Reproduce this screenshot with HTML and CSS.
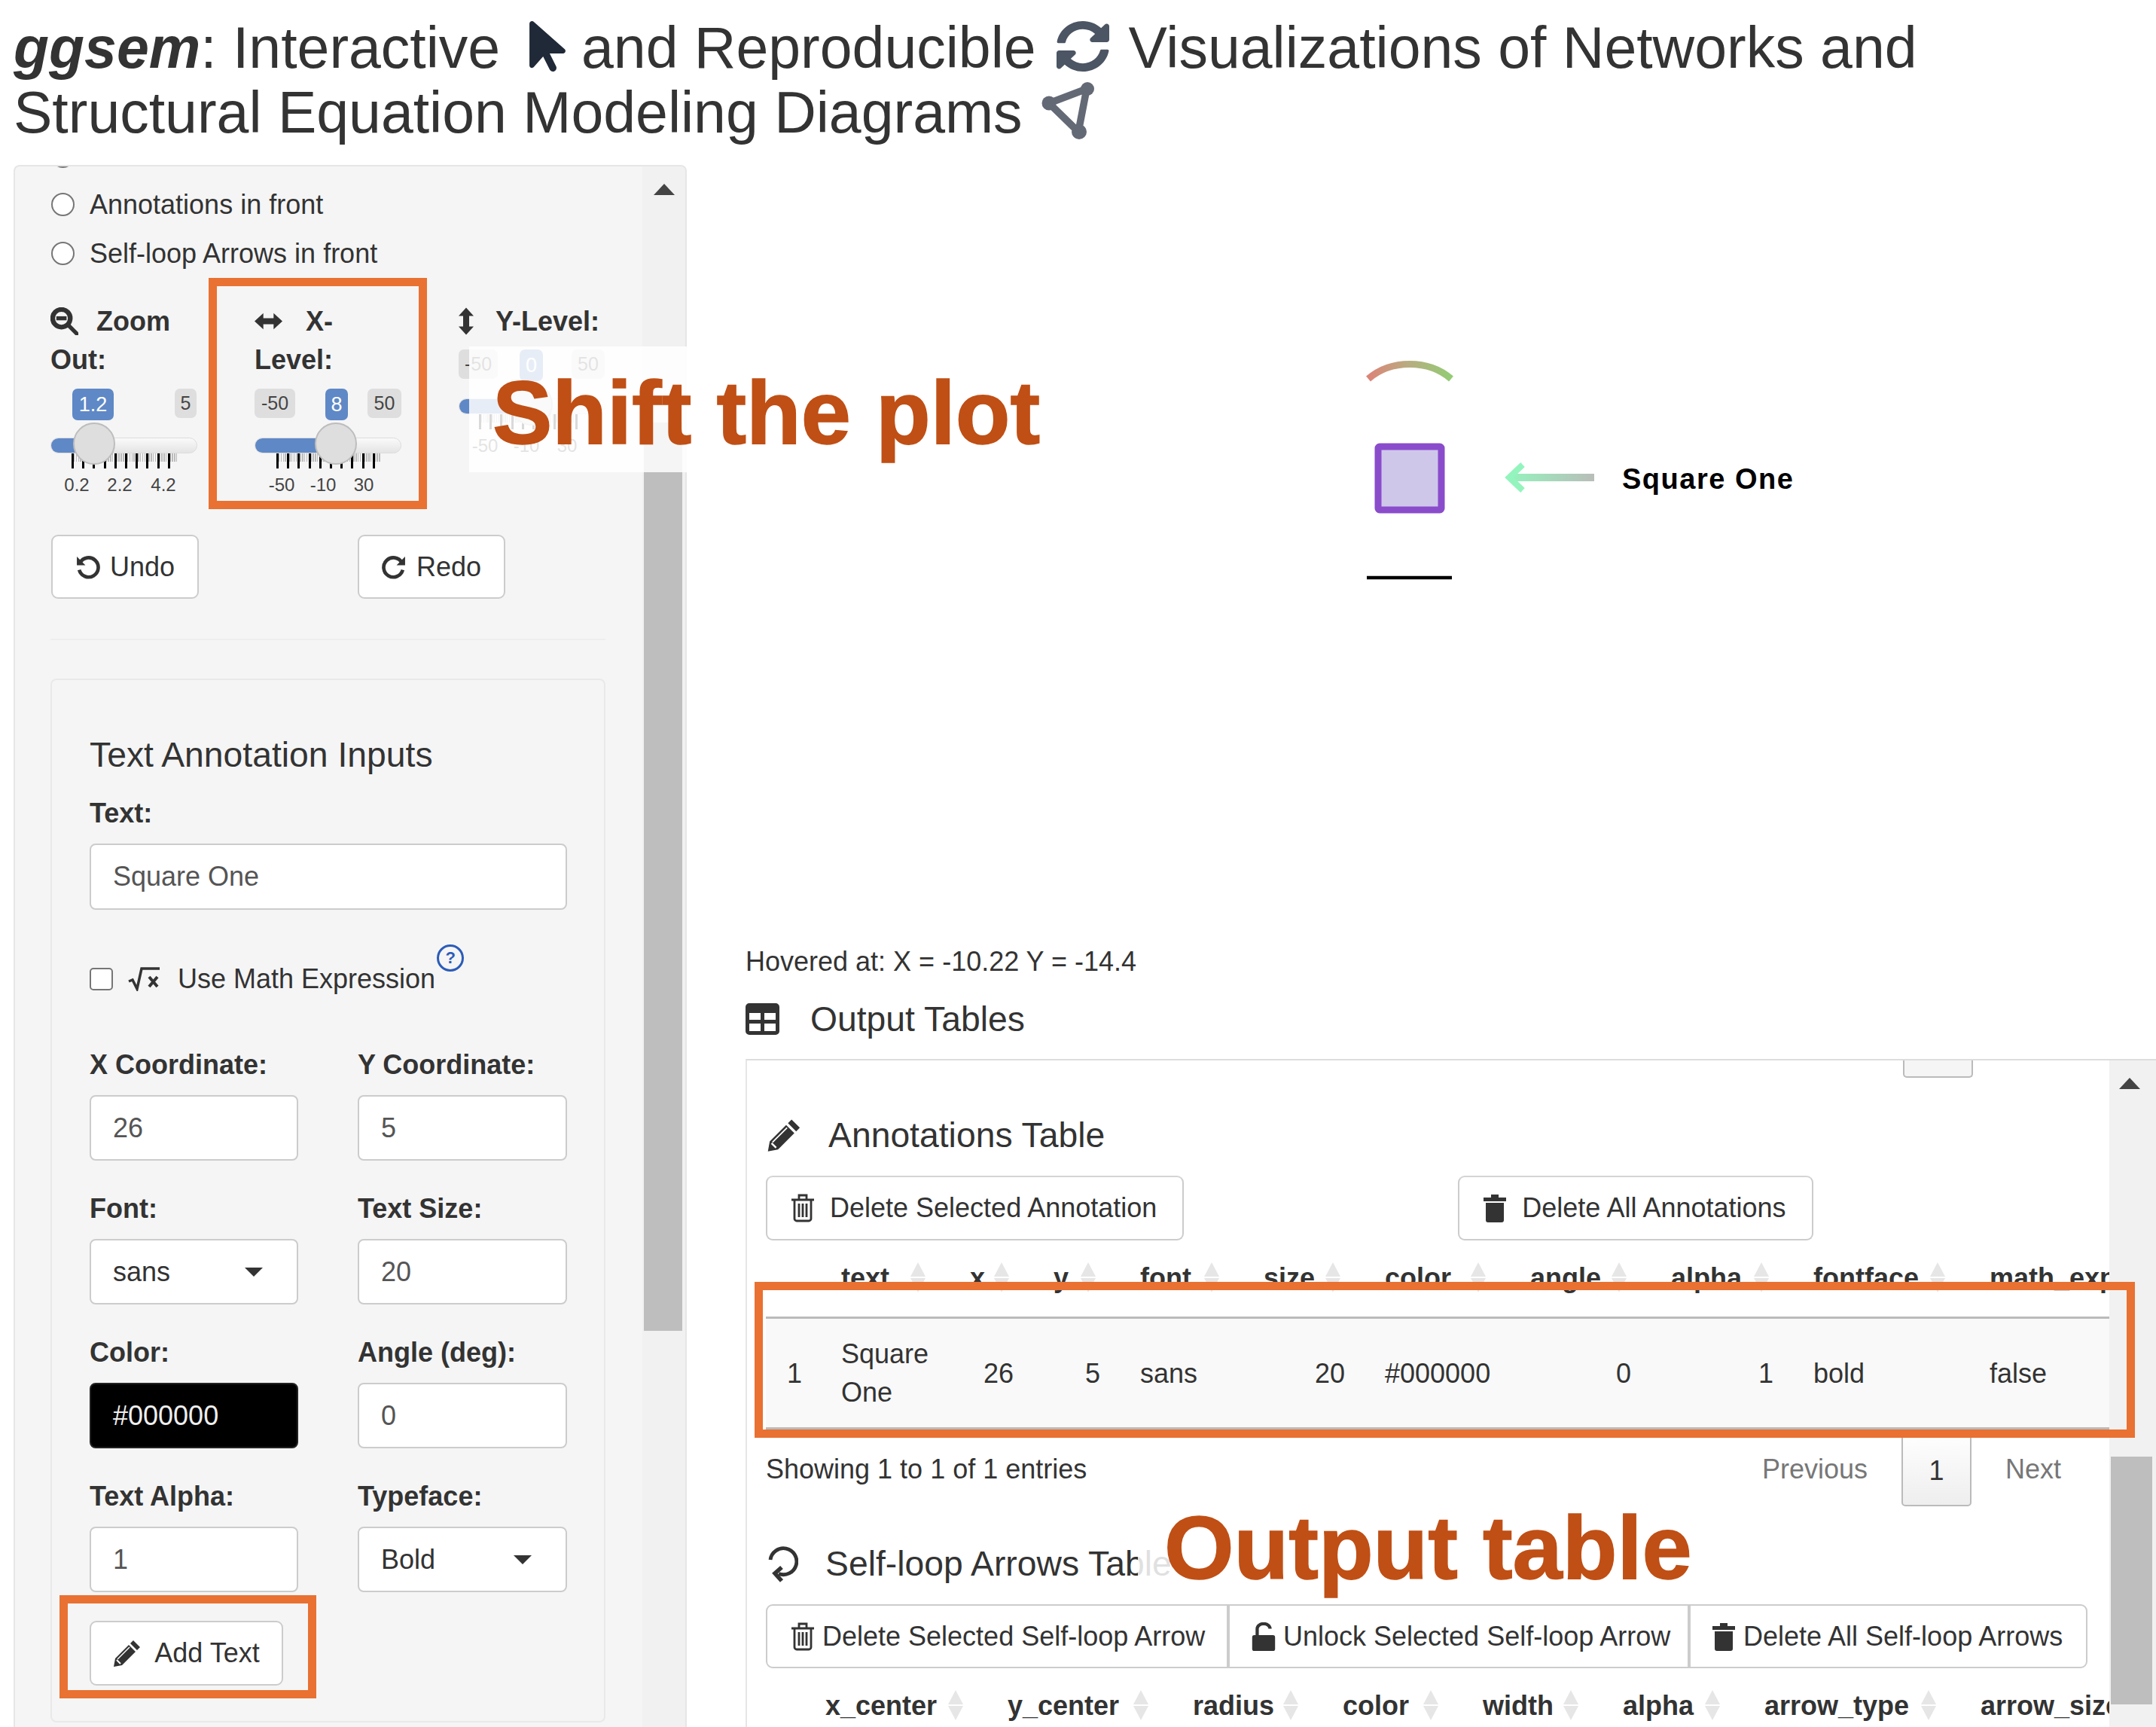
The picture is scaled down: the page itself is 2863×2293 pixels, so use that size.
FILE: index.html
```html
<!DOCTYPE html>
<html>
    <head>
        <meta charset="UTF-8">
        <title>ggsem</title>
        <link rel="stylesheet" href="styles.css">
    </head>
    <body>
        <h1 class="title">
            <b><i>ggsem</i></b>: Interactive
            <svg class="ico-cursor" viewBox="0 32 320 448"><path d="M0 55.2V426c0 12.2 9.9 22 22 22 6.3 0 12.4-2.7 16.6-7.5L121.2 346l58.1 116.3c7.9 15.8 27.1 22.2 42.9 14.3s22.2-27.1 14.3-42.9L179.8 320h118.1c12.2 0 22.1-9.9 22.1-22.1 0-6.3-2.7-12.3-7.4-16.5L38.6 37.9C34.3 34.1 28.9 32 23.2 32 10.4 32 0 42.4 0 55.2z"/></svg>
            and Reproducible
            <svg class="ico-sync" viewBox="8 8 496 496" preserveAspectRatio="none"><path d="M370.72 133.28C339.458 104.008 298.888 87.962 255.848 88c-77.458.068-144.328 53.178-162.791 126.85-1.344 5.363-6.122 9.15-11.651 9.15H24.103c-7.498 0-13.194-6.807-11.807-14.176C33.933 94.924 134.813 8 256 8c66.448 0 126.791 26.136 171.315 68.685L463.03 40.97C478.149 25.851 504 36.559 504 57.941V192c0 13.255-10.745 24-24 24H345.941c-21.382 0-32.09-25.851-16.971-40.971l41.75-41.749zM32 296h134.059c21.382 0 32.09 25.851 16.971 40.971l-41.75 41.75c31.262 29.273 71.835 45.319 114.876 45.28 77.418-.07 144.315-53.144 162.787-126.849 1.344-5.363 6.122-9.15 11.651-9.15h57.304c7.498 0 13.194 6.807 11.807 14.176C478.067 417.076 377.187 504 256 504c-66.448 0-126.791-26.136-171.315-68.685L48.97 471.03C33.851 486.149 8 475.441 8 454.059V320c0-13.255 10.745-24 24-24z"/></svg>
            Visualizations of Networks and<br>
            Structural Equation Modeling Diagrams
            <svg class="ico-graph" viewBox="0 0 70 77"><path d="M60 10 L10 29 L49 67 Z" fill="none" stroke="#636975" stroke-width="9.500" stroke-linejoin="round"/><circle cx="61" cy="10" r="9"/><circle cx="10" cy="29" r="9.500"/><circle cx="50" cy="67" r="10"/></svg>
        </h1>

        <div class="columns">
            <aside class="sidebar">
                <div class="side-body">
                    <div class="radio-row radio-cut"><span class="radio"></span></div>
                    <div class="radio-row"><span class="radio"></span>Annotations in front</div>
                    <div class="radio-row"><span class="radio"></span>Self-loop Arrows in front</div>

                    <div class="slider-grid">
                        <div>
                            <div class="slider-label">
                                <svg class="ico-label ico-zoom" viewBox="0 0 38 38"><circle cx="15" cy="15" r="12" fill="none" stroke="#333" stroke-width="6.500"/><path d="M8 15h14" stroke="#333" stroke-width="5.500"/><path d="M24 24l12 12" stroke="#333" stroke-width="5.500" stroke-linecap="round"/></svg>Zoom Out:
                            </div>
                            <div class="slider">
                                <span class="badge badge-on" style="left:29px;width:55px">1.2</span>
                                <span class="badge" style="left:165px;width:29px">5</span>
                                <div class="track"><div class="track-fill" style="width:58px"></div></div>
                                <div class="ticks" style="left:28px;width:140px"></div>
                                <span class="handle" style="left:30px"></span>
                                <span class="tick-label" style="left:35px">0.2</span>
                                <span class="tick-label" style="left:92px">2.2</span>
                                <span class="tick-label" style="left:150px">4.2</span>
                            </div>
                        </div>
                        <div>
                            <div class="slider-label">
                                <svg class="ico-label" viewBox="0 0 38 24"><path d="M0 12L12 1v7h14V1l12 11-12 11v-7H12v7z" fill="#333"/></svg>X-Level:
                            </div>
                            <div class="slider">
                                <span class="badge" style="left:0;width:54px">-50</span>
                                <span class="badge badge-on" style="left:94px;width:30px">8</span>
                                <span class="badge" style="left:150px;width:45px">50</span>
                                <div class="track"><div class="track-fill" style="width:108px"></div></div>
                                <div class="ticks" style="left:29px;width:139px"></div>
                                <span class="handle" style="left:80px"></span>
                                <span class="tick-label" style="left:36px">-50</span>
                                <span class="tick-label" style="left:91px">-10</span>
                                <span class="tick-label" style="left:145px">30</span>
                            </div>
                        </div>
                        <div>
                            <div class="slider-label">
                                <svg class="ico-label ico-v" viewBox="0 0 20 36"><path d="M10 0l10 11h-6v14h6L10 36 0 25h6V11H0z" fill="#333"/></svg>Y-Level:
                            </div>
                            <div class="slider slider-y">
                                <span class="badge" style="left:0;width:52px">-50</span>
                                <span class="badge badge-on" style="left:81px;width:31px">0</span>
                                <span class="badge" style="left:150px;width:44px">50</span>
                                <div class="track"><div class="track-fill" style="width:97px"></div></div>
                                <div class="ticks" style="left:27px;width:131px"></div>
                                <span class="handle" style="left:69px"></span>
                                <span class="tick-label" style="left:35px">-50</span>
                                <span class="tick-label" style="left:90px">-10</span>
                                <span class="tick-label" style="left:144px">30</span>
                            </div>
                        </div>
                    </div>

                    <div class="undo-row">
                        <div class="btn btn-undo">
                            <svg class="ico-btn" viewBox="0 0 32 32"><path d="M6 11a12.500 12.500 0 1 1-1 9" fill="none" stroke="#333" stroke-width="4.500"/><path d="M2 3v11h11z" fill="#333"/></svg>Undo
                        </div>
                        <div class="btn btn-undo">
                            <svg class="ico-btn" viewBox="0 0 32 32"><path d="M26 11a12.500 12.500 0 1 0 1 9" fill="none" stroke="#333" stroke-width="4.500"/><path d="M30 3v11H19z" fill="#333"/></svg>Redo
                        </div>
                    </div>
                    <hr class="side-rule">

                    <div class="well">
                        <h4 class="well-title">Text Annotation Inputs</h4>
                        <label class="field-label">Text:</label>
                        <div class="input">Square One</div>
                        <div class="check-row">
                            <span class="checkbox"></span>
                            <svg class="ico-sqrt" viewBox="0 0 42 32"><path d="M1 19l5-2 6 12 6-27h24" fill="none" stroke="#333" stroke-width="3.500"/><path d="M28 13l11 13M39 13L28 26" stroke="#333" stroke-width="4"/></svg>
                            <span>Use Math Expression</span>
                            <span class="help">?</span>
                        </div>
                        <div class="form-grid">
                            <div><label class="field-label">X Coordinate:</label><div class="input">26</div></div>
                            <div><label class="field-label">Y Coordinate:</label><div class="input">5</div></div>
                            <div><label class="field-label">Font:</label><div class="input select">sans</div></div>
                            <div><label class="field-label">Text Size:</label><div class="input">20</div></div>
                            <div><label class="field-label">Color:</label><div class="input input-black">#000000</div></div>
                            <div><label class="field-label">Angle (deg):</label><div class="input">0</div></div>
                            <div><label class="field-label">Text Alpha:</label><div class="input">1</div></div>
                            <div><label class="field-label">Typeface:</label><div class="input select">Bold</div></div>
                        </div>
                        <div class="btn btn-add">
                            <svg class="ico-pencil" viewBox="0 0 38 38"><use href="#pencil"/></svg>Add Text
                        </div>
                    </div>
                </div>
                <div class="scrollbar">
                    <span class="scroll-arrow"></span>
                    <div class="scroll-thumb side-thumb"></div>
                </div>
            </aside>

            <main class="main">
                <svg class="plot" viewBox="912 219 1951 1029">
                    <defs>
                        <linearGradient id="arcfill" x1="0" x2="1" y1="0" y2="0"><stop offset="0" stop-color="#dc8478"/><stop offset="0.5" stop-color="#b7ae80"/><stop offset="1" stop-color="#93cc74"/></linearGradient>
                        <linearGradient id="arrowfill" gradientUnits="userSpaceOnUse" x1="2000" x2="2117" y1="0" y2="0"><stop offset="0" stop-color="#93f5bd"/><stop offset="1" stop-color="#b9bdb9"/></linearGradient>
                        <symbol id="pencil" viewBox="0 0 38 38"><path d="M27 2l9 9-4 4-9-9zM21 8l9 9L12 35 1 37l2-11z" fill="#333"/><path d="M6 27l16-16" stroke="#fff" stroke-width="1.500"/><path d="M5 28l5 5" stroke="#fff" stroke-width="2"/></symbol>
                        <symbol id="trash-o" viewBox="0 0 32 38"><path d="M11 7V2h10v5M1 8h30M5 8v25a3 3 0 0 0 3 3h16a3 3 0 0 0 3-3V8M11 13v18M16 13v18M21 13v18" fill="none" stroke="#333" stroke-width="2.800"/></symbol>
                        <symbol id="trash" viewBox="0 0 32 38"><path d="M11 5V1h10v4h10v5H1V5zM4 12h24v23a3 3 0 0 1-3 3H7a3 3 0 0 1-3-3z" fill="#333"/></symbol>
                    </defs>
                    <path d="M1817 503c30-26 80-26 110 0" fill="none" stroke="url(#arcfill)" stroke-width="9"/>
                    <rect x="1830" y="593" width="84" height="84" rx="2" fill="#cfc7ea" stroke="#8a4ccb" stroke-width="9"/>
                    <path d="M2117 634H2006" stroke="url(#arrowfill)" stroke-width="10"/>
                    <path d="M2022 617L2004 634l18 17" fill="none" stroke="#93f5bd" stroke-width="8"/>
                    <text class="plot-label" x="2154" y="649">Square One</text>
                    <path d="M1815 767H1928" stroke="#000" stroke-width="4.500"/>
                </svg>

                <div class="hover-text">Hovered at: X = -10.22 Y = -14.4</div>
                <h4 class="section-title output-title">
                    <svg class="ico-table" viewBox="0 0 45 42"><path fill-rule="evenodd" d="M5 0h35a5 5 0 0 1 5 5v32a5 5 0 0 1-5 5H5a5 5 0 0 1-5-5V5a5 5 0 0 1 5-5zM5 13v9h15v-9zM25 13v9h15v-9zM5 27v10h15V27zM25 27v10h15V27z" fill="#333"/></svg>
                    Output Tables
                </h4>

                <div class="output-box">
                    <div class="output-body">
                        <div class="pager-stub"><span class="page-stub"></span></div>

                        <h4 class="section-title table-title">
                            <svg class="ico-head" viewBox="0 0 38 38"><use href="#pencil"/></svg>
                            Annotations Table
                        </h4>
                        <div class="btn-row">
                            <div class="btn btn-del"><svg class="ico-trash" viewBox="0 0 32 38"><use href="#trash-o"/></svg>Delete Selected Annotation</div>
                            <div class="btn btn-del btn-del-all"><svg class="ico-trash" viewBox="0 0 32 38"><use href="#trash"/></svg>Delete All Annotations</div>
                        </div>
                        <div class="dt">
                            <table>
                                <colgroup><col width="72"><col width="171"><col width="111"><col width="115"><col width="164"><col width="161"><col width="193"><col width="187"><col width="189"><col width="234"><col width="260"></colgroup>
                                <thead>
                                    <tr><th></th><th class="sort">text</th><th class="sort">x</th><th class="sort">y</th><th class="sort">font</th><th class="sort">size</th><th class="sort">color</th><th class="sort">angle</th><th class="sort">alpha</th><th class="sort">fontface</th><th>math_expr</th></tr>
                                </thead>
                                <tbody>
                                    <tr><td>1</td><td>Square One</td><td class="num">26</td><td class="num">5</td><td>sans</td><td class="num">20</td><td>#000000</td><td class="num">0</td><td class="num">1</td><td>bold</td><td>false</td></tr>
                                </tbody>
                            </table>
                        </div>
                        <div class="pager">
                            <span class="pager-info">Showing 1 to 1 of 1 entries</span>
                            <span class="pager-off">Previous</span>
                            <span class="page-on">1</span>
                            <span class="pager-off">Next</span>
                        </div>

                        <h4 class="section-title table-title loop-title">
                            <svg class="ico-loop" viewBox="0 0 40 50"><path d="M3 20A17.500 17.500 0 1 1 14 38.500" fill="none" stroke="#333" stroke-width="4.800"/><path d="M18 30l-9 8 9 10" fill="none" stroke="#333" stroke-width="5.500"/></svg>
                            Self-loop Arrows Table
                        </h4>
                        <div class="btn-row btn-group">
                            <div class="btn btn-grp"><svg class="ico-trash" viewBox="0 0 32 38"><use href="#trash-o"/></svg>Delete Selected Self-loop Arrow</div>
                            <div class="btn btn-grp"><svg class="ico-trash" viewBox="0 0 32 40"><path d="M3 18h26a3 3 0 0 1 3 3v16a3 3 0 0 1-3 3H3a3 3 0 0 1-3-3V21a3 3 0 0 1 3-3z" fill="#333"/><path d="M7 18V9a9 7 0 0 1 18 0" fill="none" stroke="#333" stroke-width="4.500"/></svg>Unlock Selected Self-loop Arrow</div>
                            <div class="btn btn-grp"><svg class="ico-trash" viewBox="0 0 32 38"><use href="#trash"/></svg>Delete All Self-loop Arrows</div>
                        </div>
                        <div class="dt">
                            <table>
                                <colgroup><col width="51"><col width="242"><col width="246"><col width="199"><col width="186"><col width="186"><col width="188"><col width="287"><col width="272"></colgroup>
                                <thead>
                                    <tr><th></th><th class="sort">x_center</th><th class="sort">y_center</th><th class="sort">radius</th><th class="sort">color</th><th class="sort">width</th><th class="sort">alpha</th><th class="sort">arrow_type</th><th>arrow_size</th></tr>
                                </thead>
                            </table>
                        </div>
                    </div>
                    <div class="scrollbar scrollbar-main">
                        <span class="scroll-arrow"></span>
                        <div class="scroll-thumb main-thumb"></div>
                    </div>
                </div>
            </main>
        </div>

        <!-- callouts drawn over the app -->
        <div class="mark mark-x"></div>
        <div class="mark mark-add"></div>
        <div class="mark mark-table"></div>
        <div class="caption caption-shift">Shift the plot</div>
        <div class="caption caption-output">Output table</div>
    </body>
</html>
```

FILE: styles.css
```css
* {
    box-sizing: border-box;
}

html,
body {
    margin: 0;
    height: 2293px;
    overflow: hidden;
}

body {
    position: relative;
    width: 2863px;
    background: #fff;
    color: #333;
    font-family: "Liberation Sans", Arial, sans-serif;
    font-size: 36px;
    line-height: 54px;
}

svg {
    flex: none;
}

/* page title */
.title {
    margin: 0;
    height: 219px;
    padding: 20px 0 0 18px;
    font-size: 77px;
    line-height: 86px;
    font-weight: 400;
    white-space: nowrap;
}

.ico-cursor {
    width: 48px;
    height: 67px;
    margin-left: 17px;
    vertical-align: -5px;
    fill: #1f2937;
}

.ico-sync {
    width: 70px;
    height: 67px;
    margin: 0 4px 0 6px;
    vertical-align: -5px;
    fill: #4b5563;
}

.ico-graph {
    width: 70px;
    height: 77px;
    margin-left: 4px;
    vertical-align: -9px;
    fill: #636975;
}

.columns {
    display: flex;
    height: 2074px;
}

/* left panel */
.sidebar {
    display: flex;
    flex: none;
    width: 894px;
    margin-left: 18px;
    overflow: hidden;
    background: #f5f5f5;
    border: 2px solid #e6e6e6;
    border-bottom: 0;
    border-radius: 8px 8px 0 0;
}

.side-body {
    flex: none;
    width: 833px;
    margin-top: -45px;
    padding-left: 47px;
}

.radio-row {
    display: flex;
    align-items: center;
    gap: 20px;
    height: 65px;
    padding-left: 1px;
}

.radio-cut {
    height: 63px;
}

.radio {
    flex: none;
    width: 31px;
    height: 31px;
    background: #fff;
    border: 2px solid #767676;
    border-radius: 50%;
}

.slider-grid {
    display: grid;
    grid-template-columns: repeat(3, 195px);
    column-gap: 76px;
    height: 279px;
    margin-top: 32px;
}

.slider-label {
    font-weight: 700;
    line-height: 51px;
}

.ico-label {
    width: 37px;
    height: 37px;
    margin-right: 31px;
    vertical-align: -6px;
}

.ico-zoom {
    margin-right: 24px;
}

.ico-v {
    width: 20px;
    height: 37px;
    margin-right: 29px;
}

.slider {
    position: relative;
    margin-top: 13px;
    height: 150px;
}

.slider-y {
    margin-top: 12px;
}

.badge {
    position: absolute;
    top: 0;
    height: 39px;
    background: #dedede;
    border-radius: 7px;
    color: #444;
    font-size: 25px;
    line-height: 39px;
    text-align: center;
}

.badge-on {
    height: 42px;
    background: #5f88c6;
    color: #fff;
    font-size: 27px;
    line-height: 42px;
}

.track {
    position: absolute;
    top: 65px;
    left: 0;
    width: 195px;
    height: 21px;
    overflow: hidden;
    background: linear-gradient(#fafafa, #e4e4e4);
    border: 1px solid #dcdcdc;
    border-radius: 11px;
}

.track-fill {
    height: 100%;
    background: #5f88c6;
}

.ticks {
    position: absolute;
    top: 86px;
    height: 20px;
    background-image: repeating-linear-gradient(90deg, #000 0 3px, transparent 3px 14.200px), repeating-linear-gradient(90deg, #bbb 0 1.500px, transparent 1.500px 2.840px);
    background-size: 100% 100%, 100% 11px;
    background-repeat: no-repeat;
}

.handle {
    position: absolute;
    top: 45px;
    width: 56px;
    height: 56px;
    background: #dedede;
    border: 2px solid #bdbdbd;
    border-radius: 50%;
}

.tick-label {
    position: absolute;
    top: 113px;
    color: #444;
    font-size: 24px;
    line-height: 30px;
    transform: translateX(-50%);
}

/* buttons */
.btn {
    display: flex;
    align-items: center;
    justify-content: center;
    background: #fff;
    border: 2px solid #ccc;
    border-radius: 9px;
    white-space: nowrap;
}

.undo-row {
    display: flex;
    gap: 211px;
    margin-top: 30px;
    padding-left: 1px;
}

.btn-undo {
    gap: 13px;
    width: 196px;
    height: 85px;
}

.ico-btn {
    width: 33px;
    height: 33px;
}

.side-rule {
    margin: 53px 0 0;
    width: 737px;
    height: 2px;
    background: #eee;
    border: 0;
}

/* text annotation form */
.well {
    width: 737px;
    height: 1386px;
    margin-top: 51px;
    padding: 74px 0 0 50px;
    background: #f5f5f5;
    border: 2px solid #e9e9e9;
    border-radius: 8px;
}

.well-title {
    margin: 0 0 26px;
    font-size: 46.300px;
    line-height: 50px;
    font-weight: 400;
}

.field-label {
    display: block;
    font-weight: 700;
}

.input {
    position: relative;
    width: 100%;
    height: 87px;
    margin-top: 13px;
    padding-left: 29px;
    background: #fff;
    border: 2px solid #ccc;
    border-radius: 8px;
    color: #555;
    line-height: 83px;
}

.well > .input {
    width: 634px;
    height: 88px;
}

.select {
    color: #333;
}

.select::after {
    content: "";
    position: absolute;
    top: 36px;
    right: 45px;
    border: 12px solid transparent;
    border-top: 12px solid #333;
    border-bottom: 0;
}

.input-black {
    background: #000;
    border-color: #222;
    color: #eee;
}

.check-row {
    display: flex;
    align-items: center;
    height: 60px;
    margin-top: 62px;
}

.checkbox {
    width: 31px;
    height: 30px;
    background: #fff;
    border: 2px solid #767676;
    border-radius: 5px;
}

.ico-sqrt {
    width: 42px;
    height: 32px;
    margin: 0 24px 0 20px;
}

.help {
    align-self: flex-start;
    width: 36px;
    height: 36px;
    margin: -16px 0 0 2px;
    border: 3px solid #2b5cb8;
    border-radius: 50%;
    color: #2b5cb8;
    font-size: 22px;
    font-weight: 700;
    line-height: 30px;
    text-align: center;
}

.form-grid {
    display: grid;
    grid-template-columns: 277px 278px;
    column-gap: 79px;
    row-gap: 37px;
    margin-top: 57px;
}

.btn-add {
    gap: 17px;
    width: 257px;
    height: 86px;
    margin-top: 38px;
}

.ico-pencil {
    width: 38px;
    height: 38px;
}

/* scrollbars */
.scrollbar {
    position: relative;
    flex: none;
    width: 59px;
    background: #f1f1f1;
}

.scroll-arrow {
    position: absolute;
    top: 23px;
    left: 15px;
    border: 14px solid transparent;
    border-bottom: 15px solid #444;
    border-top: 0;
}

.scrollbar-main .scroll-arrow {
    left: 13px;
}

.scroll-thumb {
    position: absolute;
    background: #bebebe;
}

.side-thumb {
    top: 340px;
    left: 2px;
    width: 51px;
    height: 1206px;
}

.main-thumb {
    top: 526px;
    left: 2px;
    width: 55px;
    height: 329px;
}

/* right side */
.main {
    flex: 1;
    min-width: 0;
}

.plot {
    display: block;
    width: 1951px;
    height: 1029px;
}

.plot-label {
    fill: #000;
    font-size: 38px;
    font-weight: 700;
    letter-spacing: 1.500px;
}

.hover-text {
    margin-top: 2px;
    padding-left: 78px;
}

.section-title {
    display: flex;
    align-items: center;
    margin: 0;
    font-size: 46.300px;
    line-height: 60px;
    font-weight: 400;
}

.output-title {
    gap: 41px;
    margin-top: 19px;
    padding-left: 78px;
}

.ico-table {
    width: 45px;
    height: 42px;
}

.output-box {
    display: flex;
    height: 887px;
    margin: 23px 0 0 78px;
    border-top: 2px solid #ddd;
    border-left: 2px solid #e6e6e6;
}

.output-body {
    flex: none;
    width: 1809px;
    padding-left: 25px;
    overflow: hidden;
}

.scrollbar-main {
    width: 64px;
}

.pager-stub {
    display: flex;
    justify-content: flex-end;
    padding-right: 181px;
}

.page-stub {
    width: 93px;
    height: 23px;
    background: #f5f5f5;
    border: 2px solid #bbb;
    border-top: 0;
    border-radius: 0 0 5px 5px;
}

.table-title {
    gap: 34px;
    margin-top: 46px;
}

.ico-head {
    width: 49px;
    height: 46px;
}

.ico-loop {
    width: 40px;
    height: 50px;
    margin-left: 3px;
}

.btn-row {
    display: flex;
    margin-top: 24px;
}

.btn-del {
    gap: 20px;
    height: 86px;
    padding: 0 34px 0 31px;
    border-top-color: #d4d4d4;
}

.btn-del-all {
    margin-left: 364px;
}

.ico-trash {
    width: 32px;
    height: 38px;
}

.dt th {
    position: relative;
    height: 101px;
    padding: 23px 25px 24px 28px;
    border-bottom: 3px solid #bbb;
    font-weight: 700;
    text-align: left;
    white-space: nowrap;
}

.btn-grp {
    justify-content: flex-start;
    gap: 10px;
    height: 85px;
    padding-left: 31px;
    border-radius: 0;
}

.btn-grp:nth-child(1) {
    width: 614px;
    border-radius: 9px 0 0 9px;
}

.btn-grp:nth-child(2) {
    width: 612px;
    padding-left: 29px;
}

.btn-grp:nth-child(3) {
    width: 529px;
    padding-left: 28px;
    border-radius: 0 9px 9px 0;
}

.dt {
    width: 1784px;
    overflow: hidden;
}

.dt table {
    width: 1857px;
    table-layout: fixed;
    border-collapse: collapse;
}

.sort::before,
.sort::after {
    content: "";
    position: absolute;
    right: 31px;
    border-left: 10px solid transparent;
    border-right: 10px solid transparent;
}

.sort::before {
    top: 29px;
    border-bottom: 19px solid #e6e6e6;
}

.sort::after {
    top: 50px;
    border-top: 19px solid #e6e6e6;
}

.dt td {
    height: 147px;
    padding: 0 25px 0 28px;
    background: #f9f9f9;
    border-bottom: 3px solid #bbb;
    line-height: 51px;
}

.dt .num {
    text-align: right;
}

.pager {
    display: flex;
    height: 102px;
}

.pager-info {
    flex: 1;
    padding-top: 26px;
}

.pager-off {
    padding-top: 26px;
    color: #777;
}

.page-on {
    width: 93px;
    margin: 0 45px 0 45px;
    padding-top: 26px;
    background: linear-gradient(#fff, #eee);
    border: 2px solid #bbb;
    border-radius: 0 0 5px 5px;
    text-align: center;
}

.pager > :last-child {
    margin-right: 64px;
}

.loop-title {
    margin-top: 46px;
    gap: 36px;
}

/* callouts */
.mark {
    position: absolute;
    border: 11px solid #e97132;
}

.mark-x {
    left: 277px;
    top: 369px;
    width: 290px;
    height: 307px;
}

.mark-add {
    left: 79px;
    top: 2118px;
    width: 341px;
    height: 137px;
}

.mark-table {
    left: 1002px;
    top: 1702px;
    width: 1833px;
    height: 207px;
}

.caption {
    position: absolute;
    background: rgba(255, 255, 255, 0.85);
    color: #c04f15;
    font-size: 119px;
    font-weight: 700;
    white-space: nowrap;
    -webkit-text-stroke: 1.500px #c04f15;
}

.caption-shift {
    left: 623px;
    top: 460px;
    width: 770px;
    height: 167px;
    padding-left: 31px;
    line-height: 175px;
}

.caption-output {
    left: 1511px;
    top: 1985px;
    width: 772px;
    height: 142px;
    padding-left: 35px;
    line-height: 140px;
}
```
